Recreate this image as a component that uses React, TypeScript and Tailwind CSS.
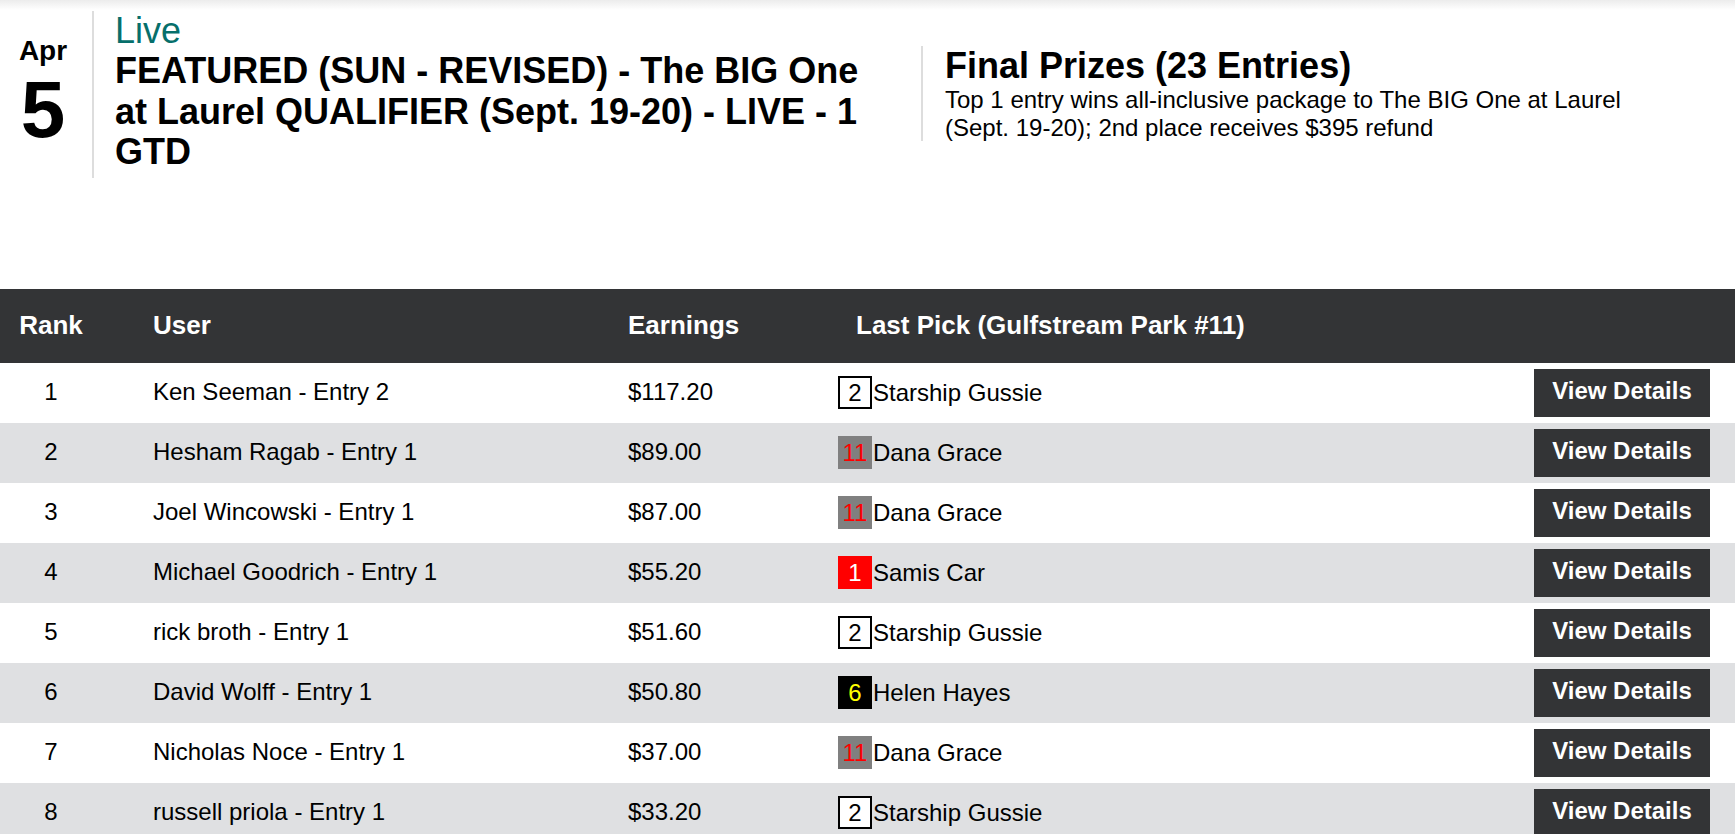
import React from "react"

type Pick = { num: string; box: string; name: string }

type Entry = {
  rank: number
  user: string
  earnings: string
  pick: Pick
}

const starship: Pick = { num: "2", box: "bg-white text-black border-2 border-black", name: "Starship Gussie" }
const dana: Pick = { num: "11", box: "bg-[#808080] text-[#ff0000]", name: "Dana Grace" }
const samis: Pick = { num: "1", box: "bg-[#ff0000] text-white", name: "Samis Car" }
const helen: Pick = { num: "6", box: "bg-black text-[#ffff00]", name: "Helen Hayes" }

const entries: Entry[] = [
  { rank: 1, user: "Ken Seeman - Entry 2", earnings: "$117.20", pick: starship },
  { rank: 2, user: "Hesham Ragab - Entry 1", earnings: "$89.00", pick: dana },
  { rank: 3, user: "Joel Wincowski - Entry 1", earnings: "$87.00", pick: dana },
  { rank: 4, user: "Michael Goodrich - Entry 1", earnings: "$55.20", pick: samis },
  { rank: 5, user: "rick broth - Entry 1", earnings: "$51.60", pick: starship },
  { rank: 6, user: "David Wolff - Entry 1", earnings: "$50.80", pick: helen },
  { rank: 7, user: "Nicholas Noce - Entry 1", earnings: "$37.00", pick: dana },
  { rank: 8, user: "russell priola - Entry 1", earnings: "$33.20", pick: starship },
]

function TournamentHeader() {
  return (
    <div className="flex items-center">
      <div className="flex items-center">
        <div className="w-[92px] pr-[6px] flex flex-col items-center justify-center font-bold text-black">
          <span className="text-[28px] leading-none">Apr</span>
          <span className="text-[80px] leading-none mt-[5px]">5</span>
        </div>

        <div className="w-[807px] border-l-2 border-[#dddddd] pl-[21px] pb-[5px] mt-[1px]">
          <div className="text-[36px] text-[#066f6b] leading-[40px]">Live</div>
          <h1 className="text-[36px] font-bold text-black leading-[40.5px]">
            FEATURED (SUN - REVISED) - The BIG One at Laurel QUALIFIER (Sept. 19-20) - LIVE - 1 GTD
          </h1>
        </div>
      </div>

      <div className="flex-1 ml-[22px] border-l-2 border-[#dddddd] pl-[22px] pr-[62px]">
        <h2 className="text-[36px] font-bold text-black leading-[40px]">Final Prizes (23 Entries)</h2>
        <p className="text-[24px] text-black leading-[27.6px]">
          Top 1 entry wins all-inclusive package to The BIG One at Laurel (Sept. 19-20); 2nd place receives $395 refund
        </p>
      </div>
    </div>
  )
}

function LeaderboardRow({ entry, striped }: { entry: Entry; striped: boolean }) {
  return (
    <div className={`flex items-center h-[60px] text-[24px] text-black ${striped ? "bg-[#dfe0e2]" : "bg-white"}`}>
      <div className="w-[102px] text-center pb-[2px]">{entry.rank}</div>
      <div className="w-[526px] pl-[51px] pb-[2px]">{entry.user}</div>
      <div className="w-[210px] pb-[2px]">{entry.earnings}</div>
      <div className="flex-1 flex items-center">
        <span className={`w-[34px] h-[33px] flex items-center justify-center leading-none ${entry.pick.box}`}>
          {entry.pick.num}
        </span>
        <span className="ml-[1px]">{entry.pick.name}</span>
      </div>
      <button
        type="button"
        className="mr-[25px] w-[176px] h-[48px] pb-[3px] bg-[#333436] text-white font-bold text-[24px]"
      >
        View Details
      </button>
    </div>
  )
}

export default function App() {
  return (
    <div className="min-h-screen bg-white font-['Liberation_Sans',Arial,sans-serif]">
      <div className="h-[10px] bg-gradient-to-b from-[#ececec] to-white" />

      <TournamentHeader />

      <div className="mt-[111px]">
        <div className="flex items-center h-[74px] bg-[#333436] text-white font-bold text-[26px]">
          <div className="w-[102px] text-center">Rank</div>
          <div className="w-[526px] pl-[51px]">User</div>
          <div className="w-[228px]">Earnings</div>
          <div className="flex-1">Last Pick (Gulfstream Park #11)</div>
        </div>

        {entries.map((e, i) => (
          <LeaderboardRow key={e.rank} entry={e} striped={i % 2 === 1} />
        ))}
      </div>
    </div>
  )
}
